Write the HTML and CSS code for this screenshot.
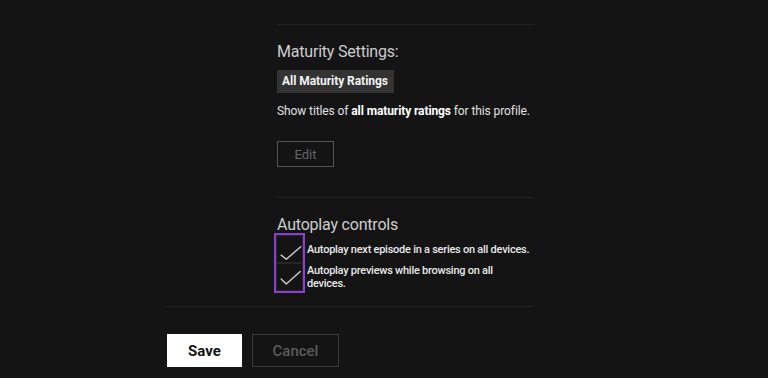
FILE: index.html
```html
<!DOCTYPE html>
<html>
<head>
<meta charset="utf-8">
<link rel="stylesheet" href="styles.css">
</head>
<body>
<div class="main">
  <section class="section maturity">
    <h2 class="title">Maturity Settings:</h2>
    <div class="badge">All Maturity Ratings</div>
    <p class="desc">Show titles of <b>all maturity ratings</b> for this profile.</p>
    <button class="edit">Edit</button>
  </section>
  <section class="section autoplay">
    <h2 class="title">Autoplay controls</h2>
    <div class="opts">
      <div class="boxes">
        <span class="box"><svg viewBox="0 0 28 28" width="26" height="28"><path d="M4.5 19.5 L10 24 L25.5 10.5" fill="none" stroke="#c8c8c8" stroke-width="1.6" stroke-linecap="round" stroke-linejoin="round"/></svg></span>
        <span class="box"><svg viewBox="0 0 28 28" width="26" height="28"><path d="M4.5 15 L10 20.5 L25 7" fill="none" stroke="#c8c8c8" stroke-width="1.6" stroke-linecap="round" stroke-linejoin="round"/></svg></span>
      </div>
      <div class="labels">
        <div class="lab1">Autoplay next episode in a series on all devices.</div>
        <div class="lab2">Autoplay previews while browsing on all devices.</div>
      </div>
    </div>
  </section>
  <div class="footer">
    <button class="save">Save</button>
    <button class="cancel">Cancel</button>
  </div>
</div>
</body>
</html>
```
FILE: styles.css
```css
html, body {
  margin: 0;
  padding: 0;
  background: #141414;
  font-family: Roboto, "Liberation Sans", sans-serif;
  color: #fff;
}
.main {
  width: 368px;
  margin-left: 167px;
  padding-top: 24px;
}
.section {
  margin-left: 110px;
  border-top: 1px solid #232323;
}
.title {
  margin: 0;
  font-weight: 400;
  font-size: 16px;
  color: #cccccc;
  letter-spacing: -0.2px;
}
.maturity {
  padding-top: 17px;
  height: 173px;
  box-sizing: border-box;
}
.maturity .title {
  line-height: 20px;
}
.badge {
  display: inline-block;
  margin-top: 8px;
  background: #333333;
  color: #f2f2f2;
  font-weight: 700;
  font-size: 12px;
  line-height: 23px;
  padding: 0 6px 0 5px;
  letter-spacing: -0.05px;
}
.desc {
  margin: 9px 0 0;
  font-size: 12px;
  line-height: 18px;
  color: #e0e0e0;
  letter-spacing: -0.1px;
}
.desc b {
  color: #fff;
  font-weight: 700;
}
.edit {
  display: block;
  margin-top: 21px;
  width: 57px;
  height: 26px;
  background: transparent;
  border: 1px solid #555555;
  color: #666666;
  font-family: inherit;
  font-size: 13px;
  padding: 0;
}
.autoplay {
  padding-top: 18px;
  height: 109px;
  box-sizing: border-box;
}
.autoplay .title {
  line-height: 17px;
}
.opts {
  display: flex;
  align-items: flex-start;
  margin-left: -3px;
}
.boxes {
  display: flex;
  flex-direction: column;
  border: 2px solid #8a3fcf;
  width: 27px;
  flex: none;
}
.box {
  display: block;
  height: 28px;
  border: 1px solid #262626;
  box-sizing: border-box;
}
.box svg {
  display: block;
}
.labels {
  width: 218px;
  margin-left: 2px;
  font-size: 11px;
  font-weight: 500;
  color: #e8e8e8;
  line-height: 13px;
  letter-spacing: -0.25px;
}
.lab1 {
  padding-top: 10px;
  white-space: nowrap;
}
.lab2 {
  padding-top: 8px;
}
.footer {
  border-top: 1px solid #232323;
  margin-top: 0;
  padding-top: 27px;
  display: flex;
  gap: 10px;
}
.save {
  width: 75px;
  height: 33px;
  background: #ffffff;
  border: none;
  color: #141414;
  font-family: inherit;
  font-weight: 700;
  font-size: 15px;
  padding: 0;
}
.cancel {
  width: 87px;
  height: 33px;
  background: transparent;
  border: 1px solid #3a3a3a;
  color: #5a5a5a;
  font-family: inherit;
  font-weight: 500;
  font-size: 15px;
  padding: 0;
}
```
